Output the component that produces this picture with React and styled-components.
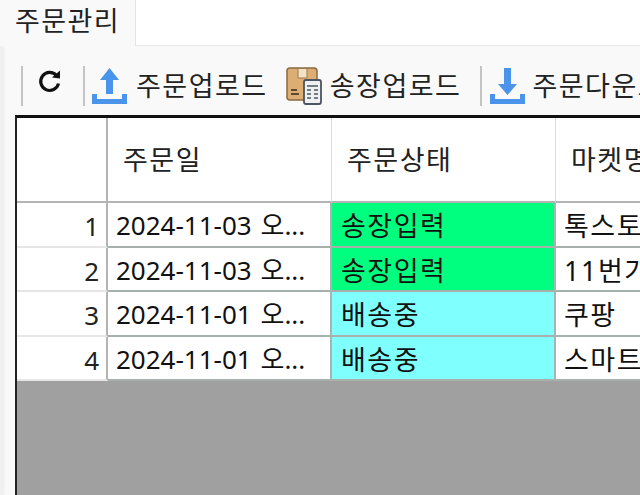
import React from 'react'
import styled, { createGlobalStyle } from 'styled-components'

const Global = createGlobalStyle`
    html, body { margin: 0; padding: 0; background: #fff; }
    #root { width: 640px; height: 495px; overflow: hidden; }
`

const Window = styled.div`
    width: 640px;
    height: 495px;
    overflow: hidden;
    display: flex;
    flex-direction: column;
    background: #fff;
    color: #111;
    font-family: "Noto Sans", "Noto Sans CJK KR", sans-serif;
    font-size: 27px;
`

const TabStrip = styled.div`
    height: 46px;
    flex: none;
    display: flex;
    background: #fff;
`

const Tab = styled.div`
    width: 136px;
    box-sizing: border-box;
    padding-left: 15px;
    line-height: 42px;
    letter-spacing: 1.4px;
    background: #f9f9f9;
    border-right: 1px solid #e4e4e4;
    color: #222;
    white-space: nowrap;
`

const TabFill = styled.div`
    flex: 1;
    border-bottom: 1px solid #e6e6e6;
`

const Pane = styled.div`
    flex: 1;
    min-height: 0;
    display: flex;
    flex-direction: column;
    padding-left: 15px;
    background: linear-gradient(to right, #f0f0f0 0, #f0f0f0 3px, #f9f9f9 6px);
`

const Toolbar = styled.div`
    height: 69px;
    flex: none;
    box-sizing: border-box;
    padding: 19px 0 8px 6px;
    display: flex;
    align-items: center;
    white-space: nowrap;
`

const Separator = styled.div`
    width: 2px;
    height: 40px;
    flex: none;
    background: #c4c4c4;
`

const ToolButton = styled.div`
    display: flex;
    align-items: center;
    flex: none;
    gap: ${({gap}) => gap || 7}px;
    padding: 0 ${({right}) => right || 0}px ${({lift}) => lift || 0}px ${({left}) => left || 0}px;
    color: #222;
    height: 40px;
`

const ToolLabel = styled.span`
    letter-spacing: 1.5px;
    margin-bottom: 3px;
`

const Grid = styled.div`
    flex: 1;
    min-height: 0;
    width: 640px;
    box-sizing: border-box;
    border-top: 3px solid #111;
    border-left: 2px solid #222;
    background: #a0a0a0;
    overflow: hidden;
`

const Row = styled.div`
    display: grid;
    grid-template-columns: 91px 224px 224px 200px;
    grid-template-rows: ${({head}) => head ? 85 : 44.5}px;
    width: 739px;
`

const RowHead = styled.div`
    background: #fff;
    border-right: 2px solid #b4b4b4;
    border-bottom: 2px solid ${({head}) => head ? '#b4b4b4' : '#e6e6e6'};
    box-sizing: border-box;
    text-align: right;
    padding-right: 7px;
    font-size: 26px;
    line-height: 46px;
    overflow: hidden;
    color: #222;
`

const HeaderCell = styled.div`
    background: #fff;
    border-right: 1px solid #dcdcdc;
    border-bottom: 2px solid #b4b4b4;
    box-sizing: border-box;
    padding-left: 15px;
    line-height: 84px;
    letter-spacing: 1.5px;
    overflow: hidden;
    color: #222;
`

const Cell = styled.div`
    background: ${({status}) => status === '배송중' ? '#80ffff' : status ? '#00ff7f' : '#fff'};
    border-right: 2px solid #a8b4b4;
    border-bottom: 2px solid #a8b0ac;
    box-sizing: border-box;
    padding-left: ${({status}) => status ? 9 : 8}px;
    line-height: 45px;
    font-size: ${({date}) => date ? 26 : 27}px;
    letter-spacing: ${({date}) => date ? 0 : 1.5}px;
    word-spacing: ${({date}) => date ? 2 : 0}px;
    white-space: nowrap;
    overflow: hidden;
    color: #111;
`

const UploadIcon = () => (
    <svg width="38" height="38" viewBox="0 0 38 38">
        <path d="M18.5 1 L28 13 H22 V27 H15 V13 H9 Z" fill="#4a94ec" />
        <path d="M1 27 V37 H36 V27 H31 V32 H6 V27 Z" fill="#4a94ec" />
    </svg>
)

const DownloadIcon = () => (
    <svg width="38" height="38" viewBox="0 0 38 38">
        <path d="M18.5 28 L28 17 H22 V1 H15 V17 H9 Z" fill="#4a94ec" />
        <path d="M1 27 V37 H36 V27 H31 V32 H6 V27 Z" fill="#4a94ec" />
    </svg>
)

const RefreshIcon = () => (
    <svg width="26" height="26" viewBox="0 0 26 26" fill="none">
        <path d="M19.5 7.5 A9 9 0 1 0 21.5 15.5" stroke="#111" strokeWidth="3.2" />
        <path d="M15 9.5 L23 10.5 L23 2.5 Z" fill="#111" />
    </svg>
)

const ParcelIcon = () => (
    <svg width="36" height="38" viewBox="0 0 36 38">
        <rect x="1" y="1" width="30" height="32" rx="3" fill="#dcae74" stroke="#8a6a42" strokeWidth="1.5" />
        <path d="M12 1.5 H21 V11 H12 Z" fill="#f4e2c4" stroke="#9a7a50" strokeWidth="1" />
        <path d="M5 23 H11 M5 27 H13" stroke="#5a4a30" strokeWidth="1.8" />
        <rect x="18" y="13" width="17" height="24" rx="2" fill="#eef0f2" stroke="#4c5660" strokeWidth="1.8" />
        <path d="M21 19 H32 M21 23 H25 M28 23 H32 M21 27 H25 M28 27 H32 M21 31 H25 M28 31 H32" stroke="#4c5660" strokeWidth="1.6" />
    </svg>
)

const columns = ['주문일', '주문상태', '마켓명']

const rows = [
    { no: 1, date: '2024-11-03 오...', status: '송장입력', market: '톡스토어' },
    { no: 2, date: '2024-11-03 오...', status: '송장입력', market: '11번가' },
    { no: 3, date: '2024-11-01 오...', status: '배송중', market: '쿠팡' },
    { no: 4, date: '2024-11-01 오...', status: '배송중', market: '스마트스토어' },
]

const App = () => (
    <Window>
        <Global />
        <TabStrip>
            <Tab>주문관리</Tab>
            <TabFill />
        </TabStrip>
        <Pane>
            <Toolbar>
                <Separator />
                <ToolButton left={14} right={20} lift={10}><RefreshIcon /></ToolButton>
                <Separator />
                <ToolButton left={6} right={18} gap={7}><UploadIcon /><ToolLabel>주문업로드</ToolLabel></ToolButton>
                <ToolButton right={19} gap={8}><ParcelIcon /><ToolLabel>송장업로드</ToolLabel></ToolButton>
                <Separator />
                <ToolButton left={7} gap={5}><DownloadIcon /><ToolLabel>주문다운로드</ToolLabel></ToolButton>
            </Toolbar>
            <Grid>
                <Row head>
                    <RowHead head />
                    {columns.map(name => <HeaderCell key={name}>{name}</HeaderCell>)}
                </Row>
                {rows.map(row => (
                    <Row key={row.no}>
                        <RowHead>{row.no}</RowHead>
                        <Cell date>{row.date}</Cell>
                        <Cell status={row.status}>{row.status}</Cell>
                        <Cell>{row.market}</Cell>
                    </Row>
                ))}
            </Grid>
        </Pane>
    </Window>
)

export default App
